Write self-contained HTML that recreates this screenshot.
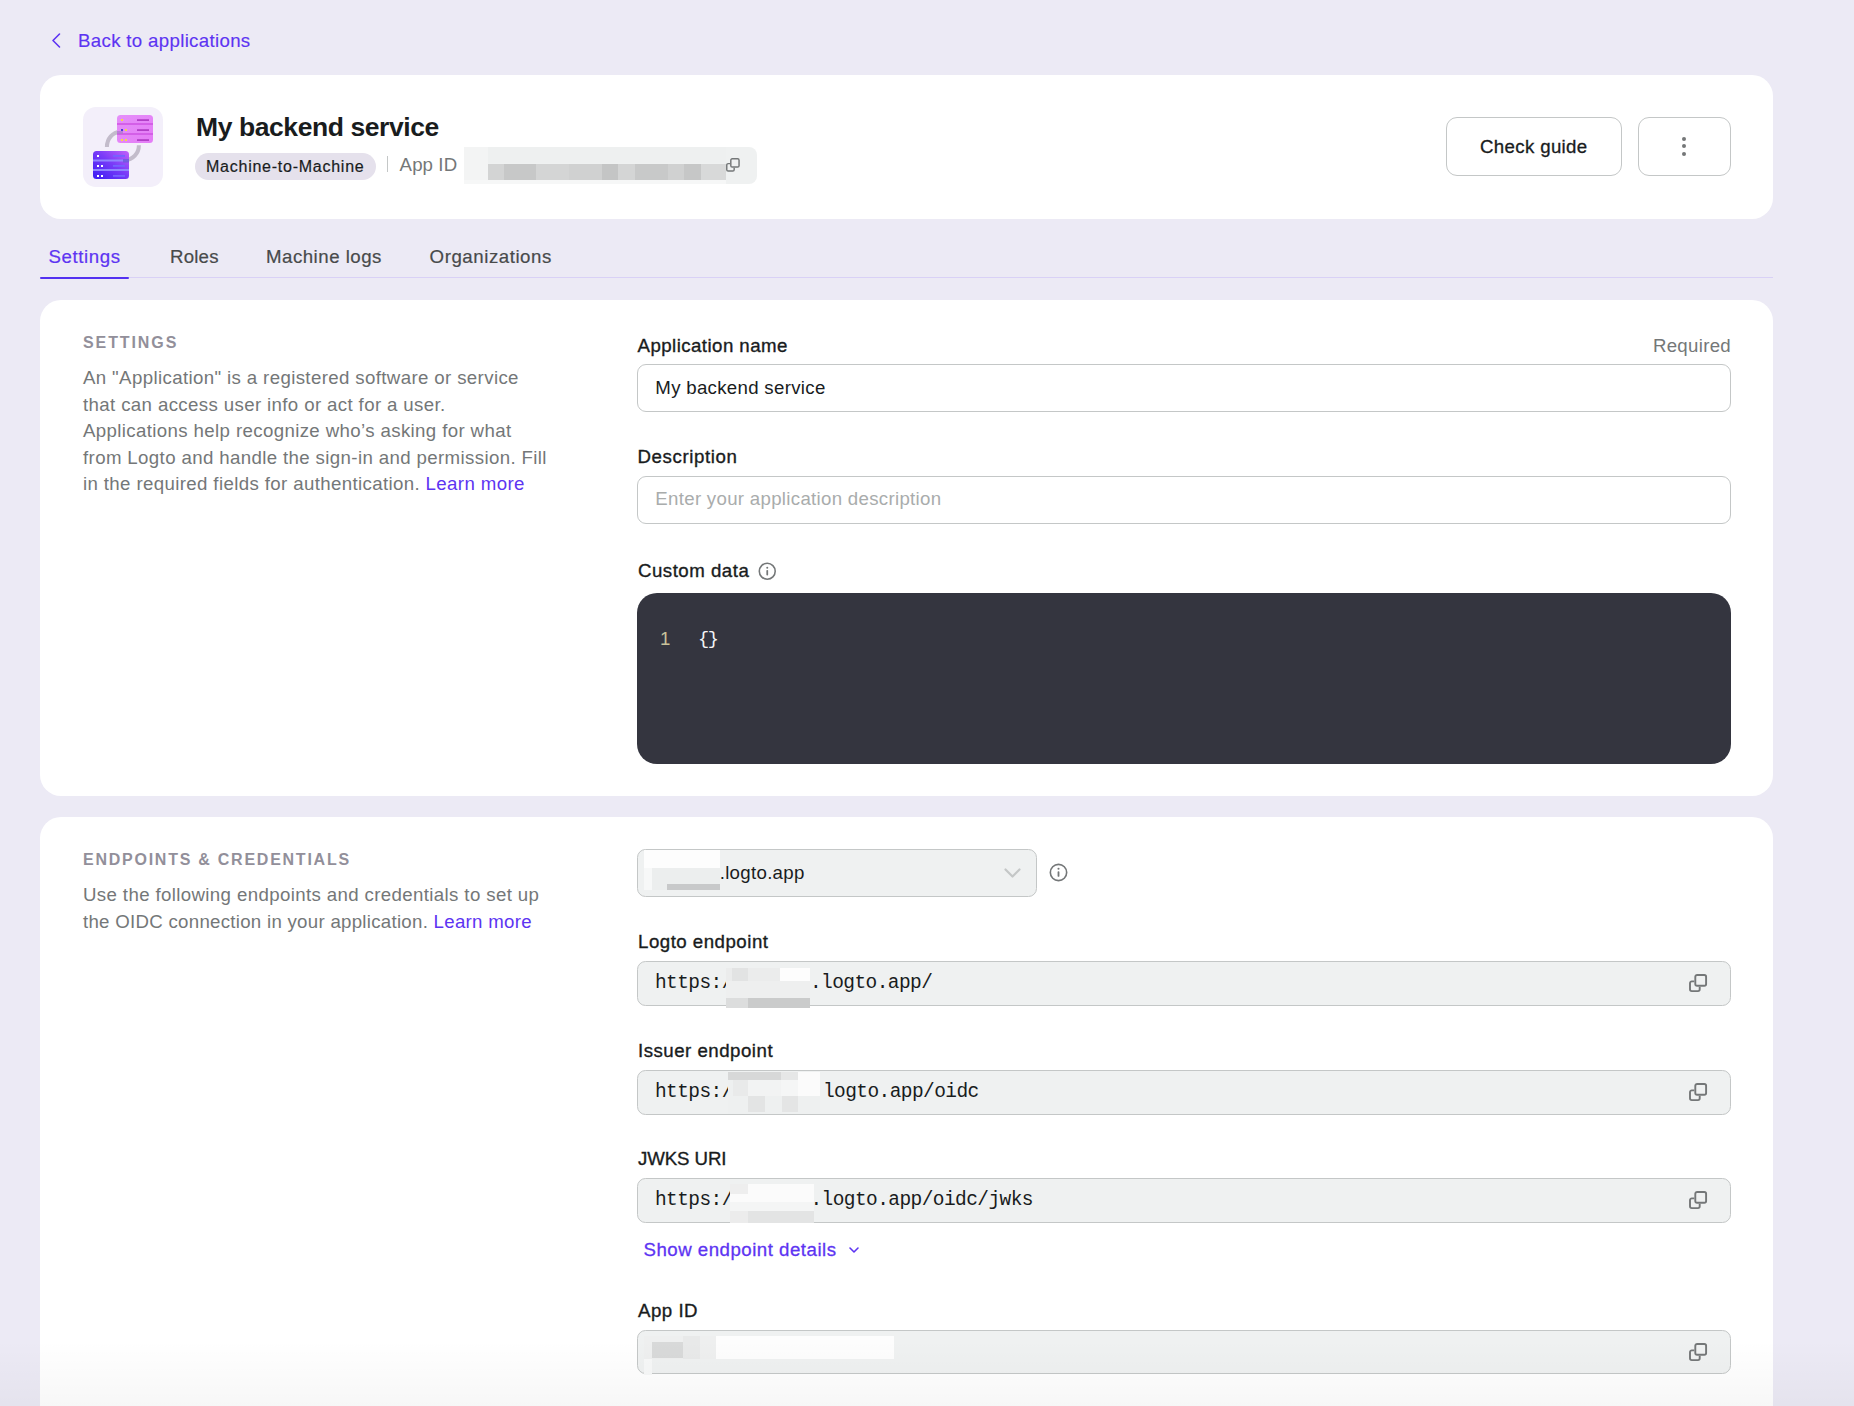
<!DOCTYPE html>
<html><head><meta charset="utf-8"><style>
html,body{margin:0;padding:0;}
body{width:1854px;height:1406px;overflow:hidden;background:#eceaf5;position:relative;font-family:'Liberation Sans', sans-serif;}
.t{position:absolute;white-space:nowrap;}
.b{position:absolute;}
</style></head><body>
<svg class="b" style="left:46px;top:30px" width="20" height="20" viewBox="0 0 20 20"><path d="M13.5 4 L7 10.5 L13.5 17" fill="none" stroke="#5d34f2" stroke-width="1.6" stroke-linecap="round" stroke-linejoin="round"/></svg>
<div class="t" style="left:78px;top:30.03px;font-size:18.67px;line-height:22.404px;color:#5d34f2;font-weight:400;letter-spacing:0.33px;font-family:'Liberation Sans', sans-serif;-webkit-text-stroke:0.15px #5d34f2;">Back to applications</div>
<div class="b" style="left:40px;top:75px;width:1733px;height:144px;background:#fff;border-radius:21px"></div>
<svg class="b" style="left:83px;top:107px" width="80" height="80" viewBox="0 0 80 80">
<defs>
<linearGradient id="gp" x1="0" y1="0" x2="1" y2="1"><stop offset="0" stop-color="#e58ff9"/><stop offset="1" stop-color="#e47cf6"/></linearGradient>
<linearGradient id="gv" x1="0" y1="1" x2="1" y2="0"><stop offset="0" stop-color="#3a1cf3"/><stop offset="0.55" stop-color="#7a3cf8"/><stop offset="1" stop-color="#c262f9"/></linearGradient>
</defs>
<rect x="0" y="0" width="80" height="80" rx="13" fill="#f3effa"/>
<path d="M23.9 40 A13.1 15.1 0 0 1 37 24.9" fill="none" stroke="#c3bccb" stroke-width="4"/>
<path d="M55.9 38.2 A13.8 14.8 0 0 1 42.1 53" fill="none" stroke="#c3bccb" stroke-width="4"/>
<rect x="34" y="8" width="36" height="28" rx="3.5" fill="url(#gp)"/>
<rect x="34" y="16" width="36" height="2" fill="#d45fe8"/>
<rect x="34" y="26" width="36" height="2" fill="#d45fe8"/>
<rect x="54" y="12.2" width="12" height="1.8" fill="#b23fc8"/>
<rect x="54" y="22.2" width="12" height="1.8" fill="#b23fc8"/>
<rect x="54" y="32.2" width="12" height="1.8" fill="#b23fc8"/>
<rect x="38" y="12" width="2" height="2" fill="#f5d84a"/>
<rect x="38" y="22" width="2" height="2" fill="#4a3ad8"/>
<rect x="42" y="22" width="2" height="2" fill="#f5d84a"/>
<rect x="38" y="32" width="2" height="2" fill="#f5d84a"/>
<rect x="42" y="32" width="2" height="2" fill="#f5d84a"/>
<rect x="34" y="24" width="6" height="3" fill="#b07ad0" opacity="0.8"/>
<rect x="10" y="44" width="36" height="28" rx="3.5" fill="url(#gv)"/>
<rect x="10" y="52.5" width="36" height="2" fill="#8f86ff"/>
<rect x="10" y="62" width="36" height="2" fill="#8f86ff"/>
<rect x="30" y="48" width="12" height="1.8" fill="#7662ff"/>
<rect x="30" y="58" width="12" height="1.8" fill="#7662ff"/>
<rect x="30" y="68" width="12" height="1.8" fill="#7662ff"/>
<rect x="14" y="48" width="2" height="2" fill="#fff"/>
<rect x="14" y="58" width="2" height="2" fill="#fff"/>
<rect x="18" y="58" width="2" height="2" fill="#fff"/>
<rect x="14" y="68" width="2" height="2" fill="#fff"/>
<rect x="18" y="68" width="2" height="2" fill="#fff"/>
<rect x="40" y="52" width="6" height="3.5" fill="#6a5ad8" opacity="0.8"/>
</svg>
<div class="t" style="left:196px;top:112.32px;font-size:26.5px;line-height:31.8px;color:#191c1d;font-weight:700;letter-spacing:-0.42px;font-family:'Liberation Sans', sans-serif;">My backend service</div>
<div class="b" style="left:195px;top:153px;width:181px;height:27px;background:#e5e1ec;border-radius:14px"></div>
<div class="t" style="left:206px;top:156.96px;font-size:16px;line-height:19.2px;color:#191c1d;font-weight:400;letter-spacing:0.75px;font-family:'Liberation Sans', sans-serif;-webkit-text-stroke:0.2px #191c1d;">Machine-to-Machine</div>
<div class="b" style="left:387px;top:156px;width:1px;height:16px;background:#c4c7c7"></div>
<div class="t" style="left:399.6px;top:154.43px;font-size:18.67px;line-height:22.404px;color:#747778;font-weight:400;letter-spacing:0.1px;font-family:'Liberation Sans', sans-serif;">App ID</div>
<div class="b" style="left:464px;top:147px;width:293px;height:37px;background:#eff1f1;border-radius:8px"></div>
<div class="b" style="left:464px;top:147px;width:262px;height:37px;filter:blur(0.6px)"><div class="b" style="left:0;top:0;width:262px;height:16px;background:#eef0f0"></div><div class="b" style="left:0;top:0;width:24px;height:37px;background:#f3f4f4"></div><div class="b" style="left:24px;top:17px;width:16px;height:16px;background:#d3d4d4"></div><div class="b" style="left:40px;top:17px;width:32px;height:16px;background:#c7c8c8"></div><div class="b" style="left:72px;top:17px;width:33px;height:16px;background:#d4d5d5"></div><div class="b" style="left:105px;top:17px;width:33px;height:16px;background:#d0d1d1"></div><div class="b" style="left:138px;top:17px;width:16px;height:16px;background:#c4c5c5"></div><div class="b" style="left:154px;top:17px;width:17px;height:16px;background:#d4d5d5"></div><div class="b" style="left:171px;top:17px;width:33px;height:16px;background:#c8c9c9"></div><div class="b" style="left:204px;top:17px;width:16px;height:16px;background:#d0d1d1"></div><div class="b" style="left:220px;top:17px;width:17px;height:16px;background:#c6c7c7"></div><div class="b" style="left:237px;top:17px;width:25px;height:16px;background:#d8d9d9"></div><div class="b" style="left:0;top:33px;width:262px;height:4px;background:#f6f7f7"></div></div>
<svg class="b" style="left:726px;top:157.5px" width="14.5" height="14.5" viewBox="0 0 19 19"><rect x="6.3" y="1" width="10.8" height="10.8" rx="1.8" fill="none" stroke="#747778" stroke-width="1.9"/><path d="M5.3 7.4 H2.8 A1.8 1.8 0 0 0 1 9.2 V15.3 A1.8 1.8 0 0 0 2.8 17.1 H8.9 A1.8 1.8 0 0 0 10.7 15.3 V12.8" fill="none" stroke="#747778" stroke-width="1.9"/></svg>
<div class="b" style="left:1446px;top:117px;width:176px;height:59px;box-sizing:border-box;border:1px solid #c4c7c7;border-radius:11px;background:#fff"></div>
<div class="t" style="left:1480px;top:136.33px;font-size:18.67px;line-height:22.404px;color:#191c1d;font-weight:400;letter-spacing:0.35px;font-family:'Liberation Sans', sans-serif;-webkit-text-stroke:0.3px #191c1d;">Check guide</div>
<div class="b" style="left:1638px;top:117px;width:93px;height:59px;box-sizing:border-box;border:1px solid #c4c7c7;border-radius:11px;background:#fff"></div>
<div class="b" style="left:1682.3px;top:136.5px;width:4px;height:4px;background:#747778;border-radius:50%"></div>
<div class="b" style="left:1682.3px;top:144.2px;width:4px;height:4px;background:#747778;border-radius:50%"></div>
<div class="b" style="left:1682.3px;top:151.9px;width:4px;height:4px;background:#747778;border-radius:50%"></div>
<div class="b" style="left:40px;top:277px;width:1733px;height:1px;background:#d9d1f6"></div>
<div class="b" style="left:40px;top:276.7px;width:89px;height:2.6px;background:#5330f1;border-radius:2px"></div>
<div class="t" style="left:48.4px;top:245.83px;font-size:18.67px;line-height:22.404px;color:#5d34f2;font-weight:400;letter-spacing:0.6px;font-family:'Liberation Sans', sans-serif;-webkit-text-stroke:0.2px #5d34f2;">Settings</div>
<div class="t" style="left:170px;top:245.83px;font-size:18.67px;line-height:22.404px;color:#484a4b;font-weight:400;letter-spacing:0.2px;font-family:'Liberation Sans', sans-serif;-webkit-text-stroke:0.2px #484a4b;">Roles</div>
<div class="t" style="left:266px;top:245.83px;font-size:18.67px;line-height:22.404px;color:#484a4b;font-weight:400;letter-spacing:0.5px;font-family:'Liberation Sans', sans-serif;-webkit-text-stroke:0.2px #484a4b;">Machine logs</div>
<div class="t" style="left:429.6px;top:245.83px;font-size:18.67px;line-height:22.404px;color:#484a4b;font-weight:400;letter-spacing:0.55px;font-family:'Liberation Sans', sans-serif;-webkit-text-stroke:0.2px #484a4b;">Organizations</div>
<div class="b" style="left:40px;top:300px;width:1733px;height:496px;background:#fff;border-radius:21px"></div>
<div class="t" style="left:83px;top:333.16px;font-size:16px;line-height:19.2px;color:#928f9a;font-weight:700;letter-spacing:1.9px;font-family:'Liberation Sans', sans-serif;">SETTINGS</div>
<div class="t" style="left:83px;top:366.93px;font-size:18.67px;line-height:22.404px;color:#747778;font-weight:400;letter-spacing:0.37px;font-family:'Liberation Sans', sans-serif;">An "Application" is a registered software or service</div>
<div class="t" style="left:83px;top:393.53px;font-size:18.67px;line-height:22.404px;color:#747778;font-weight:400;letter-spacing:0.37px;font-family:'Liberation Sans', sans-serif;">that can access user info or act for a user.</div>
<div class="t" style="left:83px;top:420.13px;font-size:18.67px;line-height:22.404px;color:#747778;font-weight:400;letter-spacing:0.37px;font-family:'Liberation Sans', sans-serif;">Applications help recognize who’s asking for what</div>
<div class="t" style="left:83px;top:446.73px;font-size:18.67px;line-height:22.404px;color:#747778;font-weight:400;letter-spacing:0.37px;font-family:'Liberation Sans', sans-serif;">from Logto and handle the sign-in and permission. Fill</div>
<div class="t" style="left:83px;top:473.33px;font-size:18.67px;line-height:22.404px;color:#747778;font-weight:400;letter-spacing:0.37px;font-family:'Liberation Sans', sans-serif;">in the required fields for authentication. <span style="color:#5d34f2">Learn more</span></div>
<div class="t" style="left:637.5px;top:334.53px;font-size:18.67px;line-height:22.404px;color:#191c1d;font-weight:400;letter-spacing:0.45px;font-family:'Liberation Sans', sans-serif;-webkit-text-stroke:0.35px #191c1d;">Application name</div>
<div class="t" style="right:123px;top:334.53px;font-size:18.67px;line-height:22.404px;color:#747778;font-weight:400;letter-spacing:0.3px;font-family:'Liberation Sans', sans-serif">Required</div>
<div class="b" style="left:637px;top:364px;width:1094px;height:48px;box-sizing:border-box;border:1px solid #c4c7c7;border-radius:9px;background:#fff"></div>
<div class="t" style="left:655.3px;top:376.83px;font-size:18.67px;line-height:22.404px;color:#191c1d;font-weight:400;letter-spacing:0.3px;font-family:'Liberation Sans', sans-serif;">My backend service</div>
<div class="t" style="left:637.5px;top:446.43px;font-size:18.67px;line-height:22.404px;color:#191c1d;font-weight:400;letter-spacing:0.6px;font-family:'Liberation Sans', sans-serif;-webkit-text-stroke:0.35px #191c1d;">Description</div>
<div class="b" style="left:637px;top:476px;width:1094px;height:48px;box-sizing:border-box;border:1px solid #c4c7c7;border-radius:9px;background:#fff"></div>
<div class="t" style="left:655.3px;top:487.83px;font-size:18.67px;line-height:22.404px;color:#a9acac;font-weight:400;letter-spacing:0.3px;font-family:'Liberation Sans', sans-serif;">Enter your application description</div>
<div class="t" style="left:638px;top:560.33px;font-size:18.67px;line-height:22.404px;color:#191c1d;font-weight:400;letter-spacing:0.5px;font-family:'Liberation Sans', sans-serif;-webkit-text-stroke:0.35px #191c1d;">Custom data</div>
<svg class="b" style="left:758.45px;top:562.45px" width="18.5" height="18.5" viewBox="0 0 20 20"><circle cx="10" cy="10" r="8.6" fill="none" stroke="#747778" stroke-width="1.7"/><rect x="9.05" y="8.6" width="1.9" height="6" rx="0.9" fill="#747778"/><circle cx="10" cy="6.1" r="1.1" fill="#747778"/></svg>
<div class="b" style="left:637px;top:593px;width:1094px;height:171px;background:#34353f;border-radius:20px"></div>
<div class="t" style="left:660px;top:628.23px;font-size:18.67px;line-height:22.404px;color:#c8c29a;font-weight:400;letter-spacing:0px;font-family:'Liberation Sans', sans-serif;">1</div>
<div class="t" style="left:698px;top:628.23px;font-size:18.67px;line-height:22.404px;color:#f5f5f5;font-weight:400;letter-spacing:-1.5px;font-family:'Liberation Mono', monospace;">{}</div>
<div class="b" style="left:40px;top:817px;width:1733px;height:700px;background:#fff;border-radius:21px"></div>
<div class="t" style="left:83px;top:850.16px;font-size:16px;line-height:19.2px;color:#928f9a;font-weight:700;letter-spacing:1.75px;font-family:'Liberation Sans', sans-serif;">ENDPOINTS &amp; CREDENTIALS</div>
<div class="t" style="left:83px;top:883.93px;font-size:18.67px;line-height:22.404px;color:#747778;font-weight:400;letter-spacing:0.37px;font-family:'Liberation Sans', sans-serif;">Use the following endpoints and credentials to set up</div>
<div class="t" style="left:83px;top:910.53px;font-size:18.67px;line-height:22.404px;color:#747778;font-weight:400;letter-spacing:0.28px;font-family:'Liberation Sans', sans-serif;">the OIDC connection in your application. <span style="color:#5d34f2">Learn more</span></div>
<div class="b" style="left:637px;top:849px;width:400px;height:48px;box-sizing:border-box;border:1px solid #c4c7c7;border-radius:8.5px;background:#eff1f1"></div>
<div class="b" style="left:644px;top:850px;width:76px;height:18px;background:#fdfdfd"></div>
<div class="b" style="left:644px;top:868px;width:8px;height:22px;background:#f7f8f8"></div>
<div class="b" style="left:652px;top:868px;width:68px;height:16px;background:#eceeee"></div>
<div class="b" style="left:652px;top:884px;width:15px;height:6px;background:#eceeee"></div>
<div class="b" style="left:667px;top:884px;width:53px;height:6px;background:#c8c9ca"></div>
<div class="t" style="left:719.7px;top:862.03px;font-size:18.67px;line-height:22.404px;color:#191c1d;font-weight:400;letter-spacing:0.3px;font-family:'Liberation Sans', sans-serif;">.logto.app</div>
<svg class="b" style="left:1003px;top:864px" width="20" height="18" viewBox="0 0 20 18"><path d="M2.5 5.5 L9.5 12.5 L16.5 5.5" fill="none" stroke="#c4c7c7" stroke-width="2.2" stroke-linecap="round" stroke-linejoin="round"/></svg>
<svg class="b" style="left:1049.2px;top:863.0px" width="19" height="19" viewBox="0 0 20 20"><circle cx="10" cy="10" r="8.6" fill="none" stroke="#747778" stroke-width="1.7"/><rect x="9.05" y="8.6" width="1.9" height="6" rx="0.9" fill="#747778"/><circle cx="10" cy="6.1" r="1.1" fill="#747778"/></svg>
<div class="t" style="left:638px;top:931.43px;font-size:18.67px;line-height:22.404px;color:#191c1d;font-weight:400;letter-spacing:0.5px;font-family:'Liberation Sans', sans-serif;-webkit-text-stroke:0.35px #191c1d;">Logto endpoint</div>
<div class="b" style="left:637px;top:961px;width:1094px;height:45px;box-sizing:border-box;border:1px solid #c4c7c7;border-radius:8.5px;background:#eff1f1"></div>
<div class="t" style="left:655px;top:972.44px;font-size:19.5px;line-height:23.4px;color:#191c1d;font-weight:400;letter-spacing:-0.58px;font-family:'Liberation Mono', monospace;">https:/</div>
<div class="b" style="left:726px;top:968px;width:84px;height:13px;background:#ebecec;filter:blur(0.6px)"></div>
<div class="b" style="left:732px;top:968px;width:16px;height:13px;background:#e2e3e3;filter:blur(0.6px)"></div>
<div class="b" style="left:780px;top:968px;width:30px;height:13px;background:#fdfdfd;filter:blur(0.6px)"></div>
<div class="b" style="left:726px;top:981px;width:84px;height:17px;background:#eeefef;filter:blur(0.6px)"></div>
<div class="b" style="left:726px;top:998px;width:22px;height:10px;background:#dcdddd;filter:blur(0.6px)"></div>
<div class="b" style="left:748px;top:998px;width:62px;height:10px;background:#cacbcb;filter:blur(0.6px)"></div>
<div class="t" style="left:810px;top:972.44px;font-size:19.5px;line-height:23.4px;color:#191c1d;font-weight:400;letter-spacing:-0.58px;font-family:'Liberation Mono', monospace;">.logto.app/</div>
<svg class="b" style="left:1689px;top:974px" width="19" height="19" viewBox="0 0 19 19"><rect x="6.3" y="1" width="10.8" height="10.8" rx="1.8" fill="none" stroke="#747778" stroke-width="1.9"/><path d="M5.3 7.4 H2.8 A1.8 1.8 0 0 0 1 9.2 V15.3 A1.8 1.8 0 0 0 2.8 17.1 H8.9 A1.8 1.8 0 0 0 10.7 15.3 V12.8" fill="none" stroke="#747778" stroke-width="1.9"/></svg>
<div class="t" style="left:638px;top:1040.43px;font-size:18.67px;line-height:22.404px;color:#191c1d;font-weight:400;letter-spacing:0.5px;font-family:'Liberation Sans', sans-serif;-webkit-text-stroke:0.35px #191c1d;">Issuer endpoint</div>
<div class="b" style="left:637px;top:1070px;width:1094px;height:45px;box-sizing:border-box;border:1px solid #c4c7c7;border-radius:8.5px;background:#eff1f1"></div>
<div class="t" style="left:655px;top:1081.44px;font-size:19.5px;line-height:23.4px;color:#191c1d;font-weight:400;letter-spacing:-0.58px;font-family:'Liberation Mono', monospace;">https:/</div>
<div class="b" style="left:728px;top:1072px;width:92px;height:42px;background:#eef0f0;filter:blur(0.6px)"></div>
<div class="b" style="left:728px;top:1072px;width:53px;height:8px;background:#d7d8d8;filter:blur(0.6px)"></div>
<div class="b" style="left:781px;top:1072px;width:17px;height:8px;background:#e6e7e7;filter:blur(0.6px)"></div>
<div class="b" style="left:798px;top:1072px;width:22px;height:24px;background:#fbfbfb;filter:blur(0.6px)"></div>
<div class="b" style="left:733px;top:1080px;width:15px;height:16px;background:#e9eaea;filter:blur(0.6px)"></div>
<div class="b" style="left:748px;top:1080px;width:33px;height:16px;background:#f2f3f3;filter:blur(0.6px)"></div>
<div class="b" style="left:781px;top:1080px;width:17px;height:16px;background:#f5f6f6;filter:blur(0.6px)"></div>
<div class="b" style="left:748px;top:1096px;width:17px;height:16px;background:#e3e4e4;filter:blur(0.6px)"></div>
<div class="b" style="left:782px;top:1096px;width:16px;height:16px;background:#e4e5e5;filter:blur(0.6px)"></div>
<div class="t" style="left:823px;top:1081.44px;font-size:19.5px;line-height:23.4px;color:#191c1d;font-weight:400;letter-spacing:-0.58px;font-family:'Liberation Mono', monospace;">logto.app/oidc</div>
<svg class="b" style="left:1689px;top:1083px" width="19" height="19" viewBox="0 0 19 19"><rect x="6.3" y="1" width="10.8" height="10.8" rx="1.8" fill="none" stroke="#747778" stroke-width="1.9"/><path d="M5.3 7.4 H2.8 A1.8 1.8 0 0 0 1 9.2 V15.3 A1.8 1.8 0 0 0 2.8 17.1 H8.9 A1.8 1.8 0 0 0 10.7 15.3 V12.8" fill="none" stroke="#747778" stroke-width="1.9"/></svg>
<div class="t" style="left:638px;top:1148.13px;font-size:18.67px;line-height:22.404px;color:#191c1d;font-weight:400;letter-spacing:-0.1px;font-family:'Liberation Sans', sans-serif;-webkit-text-stroke:0.35px #191c1d;">JWKS URI</div>
<div class="b" style="left:637px;top:1178px;width:1094px;height:45px;box-sizing:border-box;border:1px solid #c4c7c7;border-radius:8.5px;background:#eff1f1"></div>
<div class="t" style="left:655px;top:1189.44px;font-size:19.5px;line-height:23.4px;color:#191c1d;font-weight:400;letter-spacing:-0.58px;font-family:'Liberation Mono', monospace;">https:/</div>
<div class="b" style="left:730px;top:1184px;width:84px;height:27px;background:#fbfbfb;filter:blur(0.6px)"></div>
<div class="b" style="left:730px;top:1184px;width:18px;height:10px;background:#eeeeee;filter:blur(0.6px)"></div>
<div class="b" style="left:730px;top:1202px;width:84px;height:10px;background:#f4f5f5;filter:blur(0.6px)"></div>
<div class="b" style="left:730px;top:1211px;width:84px;height:12px;background:#e3e4e4;filter:blur(0.6px)"></div>
<div class="b" style="left:730px;top:1211px;width:18px;height:12px;background:#ececec;filter:blur(0.6px)"></div>
<div class="t" style="left:810.5px;top:1189.44px;font-size:19.5px;line-height:23.4px;color:#191c1d;font-weight:400;letter-spacing:-0.58px;font-family:'Liberation Mono', monospace;">.logto.app/oidc/jwks</div>
<svg class="b" style="left:1689px;top:1191px" width="19" height="19" viewBox="0 0 19 19"><rect x="6.3" y="1" width="10.8" height="10.8" rx="1.8" fill="none" stroke="#747778" stroke-width="1.9"/><path d="M5.3 7.4 H2.8 A1.8 1.8 0 0 0 1 9.2 V15.3 A1.8 1.8 0 0 0 2.8 17.1 H8.9 A1.8 1.8 0 0 0 10.7 15.3 V12.8" fill="none" stroke="#747778" stroke-width="1.9"/></svg>
<div class="t" style="left:643.5px;top:1239.03px;font-size:18.67px;line-height:22.404px;color:#5d34f2;font-weight:400;letter-spacing:0.5px;font-family:'Liberation Sans', sans-serif;-webkit-text-stroke:0.3px #5d34f2;">Show endpoint details</div>
<svg class="b" style="left:845.5px;top:1243.2px" width="16" height="14" viewBox="0 0 16 14"><path d="M4 5 L8 9 L12 5" fill="none" stroke="#5d34f2" stroke-width="1.6" stroke-linecap="round" stroke-linejoin="round"/></svg>
<div class="t" style="left:638px;top:1299.73px;font-size:18.67px;line-height:22.404px;color:#191c1d;font-weight:400;letter-spacing:0.5px;font-family:'Liberation Sans', sans-serif;-webkit-text-stroke:0.35px #191c1d;">App ID</div>
<div class="b" style="left:637px;top:1330px;width:1094px;height:44px;box-sizing:border-box;border:1px solid #c4c7c7;border-radius:8.5px;background:#eff1f1"></div>
<div class="b" style="left:644px;top:1336px;width:250px;height:23px;background:#fdfdfd"></div>
<div class="b" style="left:644px;top:1336px;width:72px;height:23px;background:#eeefef"></div>
<div class="b" style="left:652px;top:1342px;width:31px;height:16px;background:#d8d9d9"></div>
<div class="b" style="left:683px;top:1336px;width:17px;height:23px;background:#e8e9e9"></div>
<div class="b" style="left:644px;top:1359px;width:8px;height:16px;background:#f7f8f8"></div>
<svg class="b" style="left:1689px;top:1343px" width="19" height="19" viewBox="0 0 19 19"><rect x="6.3" y="1" width="10.8" height="10.8" rx="1.8" fill="none" stroke="#747778" stroke-width="1.9"/><path d="M5.3 7.4 H2.8 A1.8 1.8 0 0 0 1 9.2 V15.3 A1.8 1.8 0 0 0 2.8 17.1 H8.9 A1.8 1.8 0 0 0 10.7 15.3 V12.8" fill="none" stroke="#747778" stroke-width="1.9"/></svg>
<div class="b" style="left:0px;top:1340px;width:1854px;height:66px;background:linear-gradient(to bottom, rgba(0,0,0,0), rgba(0,0,0,0.03))"></div>
</body></html>
